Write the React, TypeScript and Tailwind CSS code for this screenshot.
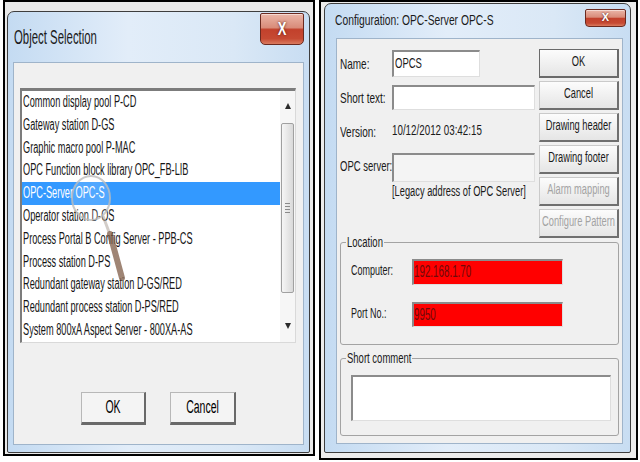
const LS = 'inline-block whitespace-nowrap scale-y-[1.85]';
const LT = 'inline-block whitespace-nowrap scale-y-[1.7]';
const RS = 'inline-block whitespace-nowrap scale-y-[1.5]';
const RL = 'inline-block whitespace-nowrap scale-y-[1.6]';

const frame =
  'border border-[#3e3e3e] rounded-t-[7px] rounded-b-[2px] bg-[linear-gradient(to_right,#c4dbf2,#e2edf9_40%,#dae8f6_75%,#c8ddf2)]';
const sunken =
  'border-t-2 border-l-2 border-r border-b border-[#8b8b8b] border-r-[#dedede] border-b-[#dedede]';

const objects = [
  'Common display pool P-CD',
  'Gateway station D-GS',
  'Graphic macro  pool P-MAC',
  'OPC Function block library OPC_FB-LIB',
  'OPC-Server OPC-S',
  'Operator station D-OS',
  'Process Portal B Config Server - PPB-CS',
  'Process station D-PS',
  'Redundant gateway station D-GS/RED',
  'Redundant process station D-PS/RED',
  'System 800xA Aspect Server - 800XA-AS',
];

function CloseButton({ big }: { big?: boolean }) {
  return (
    <div
      className={`flex items-center justify-center border border-[#6b2a20] bg-[linear-gradient(to_bottom,#ebb6a8_0%,#d98c7a_45%,#c2412c_52%,#c64a33_82%,#da7a5e_100%)] shadow-[inset_0_1px_0_rgba(255,255,255,0.5)] ${
        big ? 'w-[44px] h-[32px] rounded-b-[5px] rounded-t-[2px]' : 'w-[41px] h-[18px] rounded-b-[4px] rounded-t-[2px] pb-[3px]'
      }`}
    >
      <span
        className={`font-bold text-white [text-shadow:0_0_2px_#4a140c] ${
          big ? 'text-[13px] inline-block scale-y-[1.4]' : 'text-[11px] leading-[12px]'
        }`}
      >
        X
      </span>
    </div>
  );
}

function Scrollbar() {
  return (
    <div className="w-[15px] shrink-0 flex flex-col items-center bg-[#f6f6f6]">
      <div className="h-[30px] flex items-center justify-center">
        <div className="w-0 h-0 border-x-[3.5px] border-x-transparent border-b-[6px] border-b-[#2b2b2b]" />
      </div>
      <div className="mt-[2px] w-[13px] h-[170px] rounded-[2px] border border-[#a0a0a0] bg-linear-to-r from-[#f6f6f6] to-[#d9d9d9] flex flex-col items-center justify-center gap-[2px]">
        {[0, 1, 2, 3].map(i => (
          <div key={i} className="w-[5px] h-px bg-[#8a8a8a]" />
        ))}
      </div>
      <div className="flex-1 flex items-end justify-center pb-[13px]">
        <div className="w-0 h-0 border-x-[3.5px] border-x-transparent border-t-[6px] border-t-[#2b2b2b]" />
      </div>
    </div>
  );
}

function LeftButton({ label, w }: { label: string; w: string }) {
  return (
    <button
      className={`${w} h-[33px] flex items-center justify-center bg-[#f4f4f4] border-t border-l border-r-2 border-b-[3px] border-[#b8b8b8] border-r-[#696969] border-b-[#696969] text-[10.5px] text-black`}
    >
      <span className={LT}>{label}</span>
    </button>
  );
}

function ObjectSelection() {
  return (
    <div className="ml-[3px] w-[312px] h-[456px] shrink-0 border-2 border-black bg-[#e9e9e9]">
      <div className={`ml-[2px] mt-[9px] w-[303px] h-[442px] flex flex-col px-[5px] pb-[7px] ${frame}`}>
        {/* title bar */}
        <div className="h-[50px] flex justify-between">
          <div className="pl-[1px] mt-[15px] leading-[20px] text-[11.4px] text-[#1b1b1b]">
            <span className={LT}>Object Selection</span>
          </div>
          <div className="mt-[1px]">
            <CloseButton big />
          </div>
        </div>

        <div className="relative flex-1 bg-[#f0f0f0] border border-[#9fb4ca] flex flex-col">
          <div className="ml-[6px] mt-[25px] w-[276px] h-[255px] flex bg-white border-t-[3px] border-l-2 border-r border-b border-[#7c7c7c] border-r-[#d9d9d9] border-b-[#d9d9d9]">
            <div className="flex-1">
              {objects.map(o => {
                const sel = o === 'OPC-Server OPC-S';
                return (
                  <div
                    key={o}
                    className={`h-[22.8px] leading-[22.8px] pl-[1px] text-[9.2px] ${
                      sel ? 'bg-[#3399ff] text-white' : 'text-[#161616]'
                    }`}
                  >
                    <span className={LS}>{o}</span>
                  </div>
                );
              })}
            </div>
            <Scrollbar />
          </div>

          <div className="mt-[49px] flex justify-center gap-[24px]">
            <LeftButton label="OK" w="w-[65px]" />
            <LeftButton label="Cancel" w="w-[66px]" />
          </div>

          {/* magnifier cursor */}
          <svg className="absolute left-0 top-0 pointer-events-none" width="200" height="260" viewBox="0 0 200 260">
            <ellipse cx="77" cy="135" rx="19" ry="22" fill="rgba(255,255,255,0.15)" stroke="#bdbdbd" strokeOpacity="0.8" strokeWidth="2" />
            <line x1="89" y1="153" x2="95" y2="169" stroke="#b5aba4" strokeWidth="3" strokeOpacity="0.6" />
            <line x1="96" y1="171" x2="108" y2="215" stroke="#7f5c47" strokeWidth="6" strokeLinecap="round" strokeOpacity="0.75" />
          </svg>
        </div>
      </div>
    </div>
  );
}

function RightButton({ label, def, off }: { label: string; def?: boolean; off?: boolean }) {
  return (
    <button
      className={`w-[80px] h-[29px] shrink-0 flex items-center justify-center bg-linear-to-b from-[#fcfcfc] to-[#e5e5e5] border border-r-2 border-b-2 text-[9.3px] ${
        def ? 'border-[#6a6a6a]' : 'border-[#cacaca] border-r-[#6f6f6f] border-b-[#6f6f6f]'
      } ${off ? 'text-[#a3a3a3]' : 'text-[#1a1a1a]'}`}
    >
      <span className={RS}>{label}</span>
    </button>
  );
}

function Configuration() {
  return (
    <div className="ml-[4px] w-[319px] h-[460px] shrink-0 border-2 border-black bg-[#ececec]">
      <div className={`ml-[3px] mt-[1px] w-[307px] h-[450px] flex flex-col pl-[11px] pr-[7px] pb-[8px] ${frame}`}>
        <div className="h-[34px] flex justify-between">
          <div className="-ml-[1px] mt-[7px] leading-[18px] text-[10.3px] text-[#1b1b1b]">
            <span className={RS}>Configuration: OPC-Server OPC-S</span>
          </div>
          <div className="mt-[5px] -mr-[3px]">
            <CloseButton />
          </div>
        </div>

        <div className="flex-1 bg-[#f0f0f0] border border-[#9fb4ca] flex flex-col text-[#1a1a1a]">
          <div className="flex">
            {/* form */}
            <div className="flex-1 pl-[3px] flex flex-col text-[10px]">
              <div className="mt-[11px] h-[27px] flex items-center">
                <div className="w-[52px] shrink-0">
                  <span className={RS}>Name:</span>
                </div>
                <div className={`w-[88px] h-full bg-white flex items-center pl-[1px] text-[9.5px] ${sunken}`}>
                  <span className={RS}>OPCS</span>
                </div>
              </div>
              <div className="mt-[8px] h-[25px] flex items-center">
                <div className="w-[52px] shrink-0">
                  <span className={RS}>Short text:</span>
                </div>
                <div className={`w-[143px] h-full bg-white ${sunken}`} />
              </div>
              <div className="h-[43px] flex items-center">
                <div className="w-[52px] shrink-0">
                  <span className={RS}>Version:</span>
                </div>
                <span className={`${RS} text-[9.8px]`}>10/12/2012 03:42:15</span>
              </div>
              <div className="h-[29px] flex items-center">
                <div className="w-[52px] shrink-0 text-[9.5px]">
                  <span className={RS}>OPC server:</span>
                </div>
                <div className={`w-[143px] h-full bg-[#f4f4f4] ${sunken}`} />
              </div>
              <div className="h-[22px] flex items-center pl-[52px] text-[9.3px]">
                <span className={RS}>[Legacy address of OPC Server]</span>
              </div>
            </div>

            {/* buttons */}
            <div className="w-[80px] mr-[3px] mt-[10px] flex flex-col gap-[3px]">
              <RightButton label="OK" def />
              <RightButton label="Cancel" />
              <RightButton label="Drawing header" />
              <RightButton label="Drawing footer" />
              <RightButton label="Alarm mapping" off />
              <RightButton label="Configure Pattern" off />
            </div>
          </div>

          <fieldset className="mx-[3px] -mt-[2px] border border-[#a3a3a3] rounded-[3px]">
            <legend className="ml-[5px] px-[1px] leading-[12px] text-[9.5px]">
              <span className={RS}>Location</span>
            </legend>
            <div className="pl-[10px] pt-[11px] pb-[17px] flex flex-col gap-[17px] text-[9px]">
              <div className="h-[26px] flex items-center">
                <div className="w-[61px] shrink-0">
                  <span className={RL}>Computer:</span>
                </div>
                <div className={`w-[151px] h-full bg-[#ff0000] flex items-center text-[9.8px] text-[#6e0a0a] ${sunken} border-r-[#c9c9c9] border-b-[#c9c9c9]`}>
                  <span className={RL}>192.168.1.70</span>
                </div>
              </div>
              <div className="h-[25px] flex items-center">
                <div className="w-[61px] shrink-0">
                  <span className={RL}>Port No.:</span>
                </div>
                <div className={`w-[151px] h-full bg-[#ff0000] flex items-center text-[9.8px] text-[#6e0a0a] ${sunken} border-r-[#c9c9c9] border-b-[#c9c9c9]`}>
                  <span className={RL}>9950</span>
                </div>
              </div>
            </div>
          </fieldset>

          <fieldset className="mx-[3px] mt-[7px] border border-[#a3a3a3] rounded-[3px]">
            <legend className="ml-[5px] px-[1px] leading-[12px] text-[9.5px]">
              <span className={RS}>Short comment</span>
            </legend>
            <div className="pl-[10px] pr-[7px] pt-[11px] pb-[14px]">
              <div className={`h-[46px] bg-white ${sunken}`} />
            </div>
          </fieldset>
        </div>
      </div>
    </div>
  );
}

export default function App() {
  return (
    <div className="w-[640px] h-[462px] bg-white flex items-start overflow-hidden font-['Liberation_Sans',Arial,sans-serif]">
      <ObjectSelection />
      <Configuration />
    </div>
  );
}
